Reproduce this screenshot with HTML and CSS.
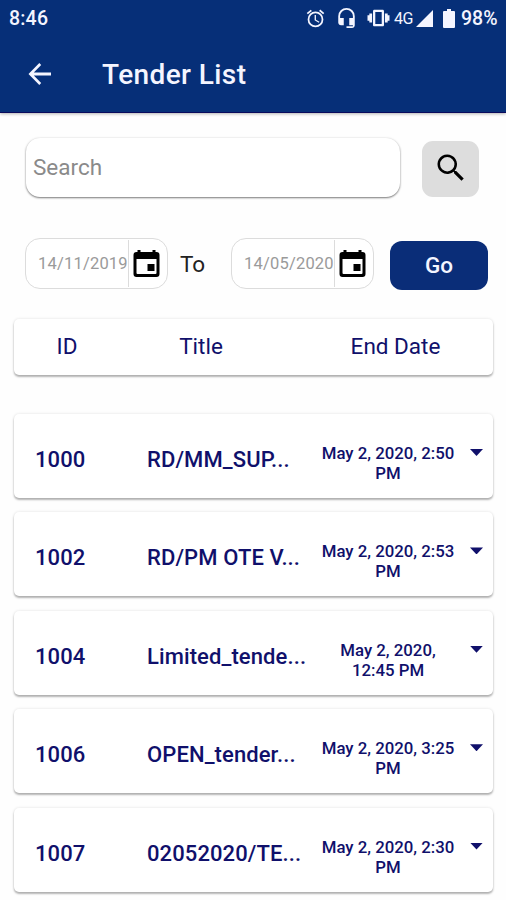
FILE: index.html
```html
<!DOCTYPE html>
<html lang="en">
<head>
    <meta charset="UTF-8">
    <meta name="viewport" content="width=device-width, initial-scale=1.0">
    <title>Tender List</title>
    <link rel="stylesheet" href="styles.css">
</head>
<body>
    <!-- Status bar + app bar -->
    <header class="header">
        <div class="status-bar">
            <span class="clock">8:46</span>
            <svg class="icon-alarm" viewBox="0 0 24 24"><path d="M22 5.7l-4.6-3.9-1.3 1.5 4.6 3.9L22 5.7zM7.9 3.4L6.6 1.9 2 5.7l1.3 1.5 4.6-3.8zM12.5 8H11v6l4.7 2.9.8-1.2-4-2.4V8zM12 4a9 9 0 1 0 0 18 9 9 0 0 0 0-18zm0 16a7 7 0 1 1 0-14 7 7 0 0 1 0 14z"/></svg>
            <svg class="icon-headset" viewBox="0 0 24 24"><path d="M12 1a9 9 0 0 0-9 9v7c0 1.66 1.34 3 3 3h3v-8H5v-2a7 7 0 0 1 14 0v2h-4v8h4v1h-7v2h6c1.66 0 3-1.34 3-3V10a9 9 0 0 0-9-9z"/></svg>
            <svg class="icon-vibrate" viewBox="0 0 24 24"><path d="M0 15h2V9H0v6zm2 2h3V7H2v10zm20-8v6h2V9h-2zm-3 8h3V7h-3v10zM16.5 3h-9C6.67 3 6 3.67 6 4.5v15c0 .83.67 1.5 1.5 1.5h9c.83 0 1.5-.67 1.5-1.5v-15c0-.83-.67-1.5-1.5-1.5zM15.500 18.500h-7v-13h7v13z"/></svg>
            <span class="network">4G</span>
            <svg class="icon-signal" viewBox="0 0 17 17"><path d="M0 17L17 0v17z"/></svg>
            <svg class="icon-battery" viewBox="0 0 12 19"><path d="M4 0h4v2h3q1 0 1 1v15q0 1-1 1H1q-1 0-1-1V3q0-1 1-1h3z"/></svg>
            <span class="battery-level">98%</span>
        </div>
        <div class="app-bar">
            <svg class="icon-back" viewBox="0 0 24 24"><path d="M23 10.500H5.800l7.400-7.500L11.300 1 .5 12l10.800 11 1.900-2-7.400-7.500H23z"/></svg>
            <h1>Tender List</h1>
        </div>
    </header>

    <main class="content">
        <!-- Search -->
        <div class="search-row">
            <input class="search-input" type="text" placeholder="Search">
            <button class="search-button" aria-label="Search">
                <svg viewBox="0 0 24 24"><path d="M15.500 14h-.79l-.28-.27A6.500 6.500 0 1 0 13.730 14.430l.27.28v.79l5 4.990L20.490 19l-4.990-5zm-6 .3a4.800 4.800 0 1 1 0-9.600 4.800 4.800 0 0 1 0 9.600z"/></svg>
            </button>
        </div>

        <!-- Date range -->
        <div class="date-row">
            <div class="date-field">
                <span>14/11/2019</span>
                <svg viewBox="0 0 26 27"><path d="M4 0h3v2h12V0h3v2h1q3 0 3 3v19q0 3-3 3H3q-3 0-3-3V5q0-3 3-3h1zM3 9v14q0 1 1 1h18q1 0 1-1V9zM14 14h7v7h-7z" fill-rule="evenodd"/></svg>
            </div>
            <span class="date-to">To</span>
            <div class="date-field">
                <span>14/05/2020</span>
                <svg viewBox="0 0 26 27"><path d="M4 0h3v2h12V0h3v2h1q3 0 3 3v19q0 3-3 3H3q-3 0-3-3V5q0-3 3-3h1zM3 9v14q0 1 1 1h18q1 0 1-1V9zM14 14h7v7h-7z" fill-rule="evenodd"/></svg>
            </div>
            <button class="go-button">Go</button>
        </div>

        <!-- Tender table -->
        <div class="card table-head">
            <span>ID</span>
            <span>Title</span>
            <span>End Date</span>
        </div>
        <div class="tender-list">
            <div class="card tender">
                <span class="tender-id">1000</span>
                <span class="tender-title">RD/MM_SUP...</span>
                <span class="tender-date">May 2, 2020, 2:50 PM</span>
                <span class="caret"></span>
            </div>
            <div class="card tender">
                <span class="tender-id">1002</span>
                <span class="tender-title">RD/PM OTE V...</span>
                <span class="tender-date">May 2, 2020, 2:53 PM</span>
                <span class="caret"></span>
            </div>
            <div class="card tender">
                <span class="tender-id">1004</span>
                <span class="tender-title">Limited_tende...</span>
                <span class="tender-date">May 2, 2020, 12:45 PM</span>
                <span class="caret"></span>
            </div>
            <div class="card tender">
                <span class="tender-id">1006</span>
                <span class="tender-title">OPEN_tender...</span>
                <span class="tender-date">May 2, 2020, 3:25 PM</span>
                <span class="caret"></span>
            </div>
            <div class="card tender">
                <span class="tender-id">1007</span>
                <span class="tender-title">02052020/TE...</span>
                <span class="tender-date">May 2, 2020, 2:30 PM</span>
                <span class="caret"></span>
            </div>
        </div>
    </main>
</body>
</html>
```
FILE: styles.css
```css
* {
    margin: 0;
    padding: 0;
    box-sizing: border-box;
}

body {
    font-family: Roboto, sans-serif;
    background-color: #fefefe;
    color: #10106b;
    height: 900px;
    overflow: hidden;
}

button {
    border: none;
    font-family: inherit;
    cursor: pointer;
}

/* Header */
.header {
    height: 113px;
    background-color: #062f78;
    border-bottom: 1px solid #0a0a5c;
    box-shadow: 0 1px 3px rgba(0, 0, 0, 0.3);
    color: #f4f5ff;
}

.header svg {
    fill: #f4f5ff;
}

.status-bar {
    display: flex;
    align-items: center;
    height: 36px;
    padding: 0 8px 0 9px;
    font-weight: 500;
}

.clock {
    flex: 1;
    font-size: 19.5px;
    letter-spacing: 0.2px;
}

.icon-alarm {
    width: 21px;
    height: 21px;
    margin-right: 9px;
}

.icon-headset {
    width: 23px;
    height: 22px;
    margin-right: 8px;
}

.icon-vibrate {
    width: 25px;
    height: 22px;
    margin-right: 3px;
}

.network {
    width: 22px;
    font-size: 16px;
    font-weight: 400;
    letter-spacing: -0.6px;
}

.icon-signal {
    width: 17px;
    height: 17px;
    margin-right: 10px;
}

.icon-battery {
    width: 12px;
    height: 19px;
    margin-right: 6px;
}

.battery-level {
    width: 37px;
    font-size: 19.5px;
}

.app-bar {
    display: flex;
    align-items: center;
    height: 76px;
    padding-left: 28px;
}

.icon-back {
    width: 24px;
    height: 24px;
    margin-right: 50px;
}

.app-bar h1 {
    font-size: 28px;
    font-weight: 500;
    letter-spacing: 0.4px;
}

.content {
    padding: 25px 13px 0 14px;
}

/* Search */
.search-row {
    display: flex;
    align-items: center;
    padding-left: 12px;
}

.search-input {
    width: 374px;
    height: 59px;
    margin-right: 22px;
    padding: 0 7px 2px;
    border: none;
    border-radius: 14px;
    background-color: #fff;
    box-shadow: 0 1px 2px rgba(0, 0, 0, 0.5), 0 0 3px rgba(0, 0, 0, 0.08);
    font-family: inherit;
    font-size: 22.5px;
}

.search-input::placeholder {
    color: #8a8a8a;
}

.search-button {
    display: flex;
    align-items: center;
    justify-content: center;
    width: 57px;
    height: 56px;
    margin-top: 3px;
    border-radius: 11px;
    background-color: #ddd;
}

.search-button svg {
    width: 36px;
    height: 36px;
    margin-top: -3px;
}

/* Date range */
.date-row {
    display: flex;
    align-items: center;
    margin-top: 40px;
    padding-left: 11px;
}

.date-field {
    display: flex;
    align-items: center;
    width: 143px;
    height: 51px;
    padding-left: 12px;
    border: 1px solid #dcdcdc;
    border-radius: 15px;
    background-color: #fff;
}

.date-field span {
    width: 91px;
    height: 47px;
    border-right: 1px solid #dcdcdc;
    color: #9a9a9a;
    font-size: 16.5px;
    line-height: 48px;
    letter-spacing: 0.2px;
    white-space: nowrap;
}

.date-field svg {
    width: 27px;
    height: 27px;
    margin-left: 4px;
}

.date-to {
    width: 63px;
    padding-left: 12px;
    color: #222;
    font-size: 22.5px;
}

.go-button {
    width: 98px;
    height: 49px;
    margin: 4px 0 0 16px;
    padding-bottom: 1px;
    border-radius: 12px;
    background-color: #0a2d78;
    color: #f4f5ff;
    font-size: 22.5px;
    font-weight: 500;
}

/* Cards */
.card {
    border-radius: 5px;
    background-color: #fff;
    box-shadow: 0 2px 2px rgba(0, 0, 0, 0.28), 0 0 3px rgba(0, 0, 0, 0.12);
}

.table-head {
    display: grid;
    grid-template-columns: 106px 162px 1fr;
    align-items: center;
    height: 56px;
    margin-top: 29px;
    padding-bottom: 2px;
    font-size: 22.5px;
    text-align: center;
}

/* shift the last heading over the date column */
.table-head span:last-child {
    padding-left: 16px;
}

.tender-list {
    display: flex;
    flex-direction: column;
    gap: 14.400px;
    margin-top: 39px;
}

.tender {
    display: grid;
    grid-template-columns: 112px 168px 1fr 32px;
    height: 84px;
    padding-left: 21px;
    font-size: 22px;
    font-weight: 500;
    white-space: nowrap;
}

.tender-id,
.tender-title {
    padding-top: 33px;
    line-height: 26px;
    letter-spacing: 0.1px;
}

.tender-date {
    padding: 29px 4px 0;
    font-size: 16.8px;
    line-height: 20px;
    text-align: center;
    white-space: normal;
}

.caret {
    width: 13px;
    height: 7px;
    margin: 35px 0 0 9px;
    background-color: #10106b;
    clip-path: polygon(0 0, 100% 0, 50% 100%);
}
```
